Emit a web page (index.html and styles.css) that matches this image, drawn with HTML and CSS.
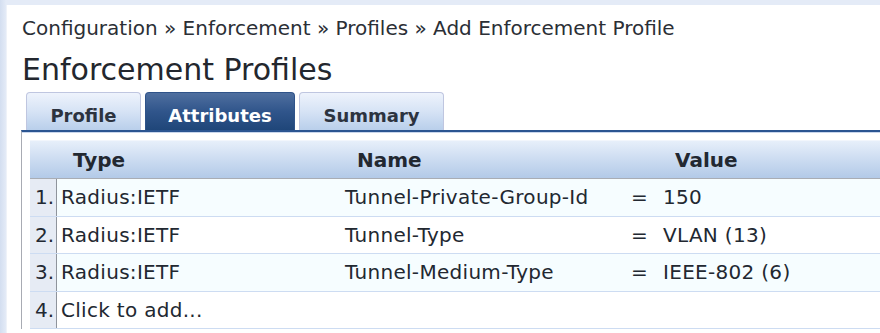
FILE: index.html
```html
<!DOCTYPE html>
<html lang="en">
<head>
  <meta charset="UTF-8">
  <title>Enforcement Profiles</title>
  <link rel="stylesheet" href="styles.css">
</head>
<body>
  <div class="page">
    <div class="breadcrumb">Configuration &raquo; Enforcement &raquo; Profiles &raquo; Add Enforcement Profile</div>
    <h1>Enforcement Profiles</h1>

    <div class="tabs">
      <div class="tab">Profile</div>
      <div class="tab active">Attributes</div>
      <div class="tab">Summary</div>
    </div>

    <div class="panel">
      <div class="attr-table">
        <div class="row head">
          <div class="num"></div>
          <div class="cell">Type</div>
          <div class="cell name-head">Name</div>
          <div class="cell">Value</div>
        </div>
        <div class="row odd">
          <div class="num">1.</div>
          <div class="cell">Radius:IETF</div>
          <div class="cell">Tunnel-Private-Group-Id</div>
          <div class="cell eq">=</div>
          <div class="cell">150</div>
        </div>
        <div class="row">
          <div class="num">2.</div>
          <div class="cell">Radius:IETF</div>
          <div class="cell">Tunnel-Type</div>
          <div class="cell eq">=</div>
          <div class="cell">VLAN (13)</div>
        </div>
        <div class="row odd">
          <div class="num">3.</div>
          <div class="cell">Radius:IETF</div>
          <div class="cell">Tunnel-Medium-Type</div>
          <div class="cell eq">=</div>
          <div class="cell">IEEE-802 (6)</div>
        </div>
        <div class="row">
          <div class="num">4.</div>
          <div class="cell add">Click to add...</div>
        </div>
      </div>
    </div>
  </div>
</body>
</html>
```

FILE: styles.css
```css
body {
  margin: 0;
  background: linear-gradient(to right, #d3def0, #e4ebf7 6px);
  font-family: "DejaVu Sans", Verdana, sans-serif;
  color: #222831;
  overflow: hidden;
  height: 333px;
}

.page {
  margin: 5px 0 0 6px;
  border-left: 1px solid #eef2f9;
  background: #ffffff;
  padding: 11px 0 0 15px;
  height: 317px;
}

.breadcrumb {
  font-size: 20px;
  line-height: 24px;
  color: #2b2f36;
}

h1 {
  margin: 12px 0 0;
  font-size: 30px;
  font-weight: normal;
  line-height: 36px;
  color: #23272e;
}

.tabs {
  display: flex;
  gap: 4px;
  margin-top: 4px;
  padding-left: 4px;
}

.tab {
  height: 38px;
  box-sizing: border-box;
  width: 115px;
  padding-top: 12px;
  text-align: center;
  font-size: 18px;
  font-weight: bold;
  color: #2c333f;
  border: 1px solid #bfc6e0;
  border-bottom: none;
  border-radius: 4px 4px 0 0;
  background: linear-gradient(#eef3fc, #d6e3f5 50%, #b9cfeb);
}

.tab.active {
  width: 150px;
  color: #ffffff;
  border-color: #2f5389;
  background: linear-gradient(#4f6f9f, #30558b 50%, #1f4679);
}

.tab:last-child {
  width: 145px;
}

.panel {
  border-top: 2px solid #2b5591;
  border-left: 1px solid #a8abb3;
  margin-left: -1px;
  padding: 8px 0 0 8px;
  box-shadow: inset 0 1px 0 #c9d6ec;
}

.row {
  display: grid;
  grid-template-columns: 27px 284px 279px 39px 1fr;
  height: 36px;
  border-bottom: 1px solid #cddcf2;
  font-size: 20px;
  letter-spacing: 0.3px;
  line-height: 36px;
}

.row.odd {
  height: 37px;
  line-height: 37px;
  background: #f6fdff;
}

.row.head {
  grid-template-columns: 27px 284px 318px 1fr;
  height: 37px;
  border-bottom: 1px solid #a9adb4;
  border-top: 1px solid #f2f6fc;
  background: linear-gradient(#e7effa, #c9daf0 55%, #b3cae8);
  font-size: 20px;
  font-weight: bold;
  letter-spacing: 0;
  line-height: 38px;
}

.row.head .cell {
  padding-left: 16px;
}

.row.head .num {
  background: none;
  border-right: none;
}

.num {
  background: #e6ebf4;
  border-right: 1px solid #8f949c;
  text-align: right;
  padding-right: 2px;
  letter-spacing: 0;
}

.cell {
  padding-left: 4px;
  white-space: nowrap;
}

.cell.eq {
  padding-left: 11px;
}

.cell.add {
  grid-column: 2 / 6;
}
```
